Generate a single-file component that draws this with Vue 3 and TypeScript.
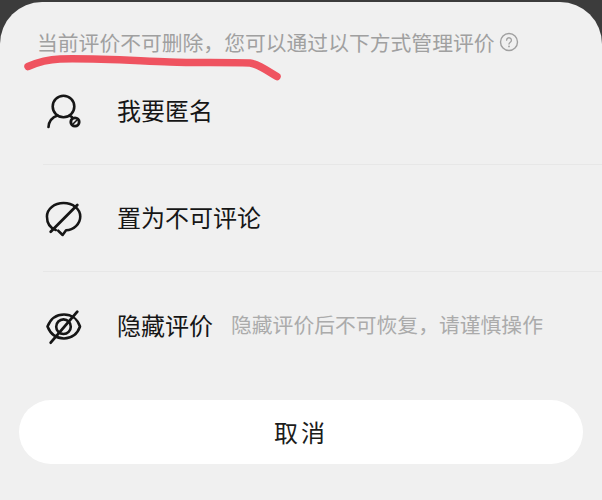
<script setup lang="ts">
interface Row { title: string; note?: string; icon: 'user' | 'chat' | 'eye' }
const rows: Row[] = [
  { title: '我要匿名', icon: 'user' },
  { title: '置为不可评论', icon: 'chat' },
  { title: '隐藏评价', note: '隐藏评价后不可恢复，请谨慎操作', icon: 'eye' },
]
</script>

<template>
  <div class="page">
    <div class="sheet">
      <div class="hint">
        <span>当前评价不可删除，您可以通过以下方式管理评价</span>
        <svg class="help" viewBox="0 0 20 20" width="20" height="20" fill="none">
          <circle cx="10" cy="10" r="8.5" stroke="#a0a0a0" stroke-width="1.4" />
          <path d="M7.6 8.200a2.400 2.400 0 1 1 3.700 2c-.9.6-1.300 1-1.300 1.900" stroke="#a0a0a0" stroke-width="1.300" stroke-linecap="round" />
          <circle cx="10" cy="14.400" r=".9" fill="#a0a0a0" />
        </svg>
      </div>
      <ul class="list">
        <li v-for="row in rows" :key="row.title" class="row">
          <svg class="icon" viewBox="0 0 36 40" width="36" height="40" fill="none" stroke="#161616" stroke-width="2.600" stroke-linecap="round" stroke-linejoin="round">
            <template v-if="row.icon === 'user'">
              <circle cx="18.500" cy="15.500" r="10.800" />
              <path d="M3.500 36c.4-5.500 4-9.800 9-11.500" />
              <path d="M24.500 24.800c1 .4 1.800.8 2.500 1.300" />
              <circle cx="30" cy="31" r="5.600" fill="#161616" stroke="none" />
              <circle cx="30" cy="31" r="2.700" fill="#f0f0f0" stroke="none" />
              <path d="M28 33l4-4" stroke-width="1.600" />
            </template>
            <template v-else-if="row.icon === 'chat'">
              <path d="M11.500 32C6 30 2.500 25 2.500 18.500 2.500 11 10 5 19.500 5s17 6 17 13.500c0 7.500-6.800 13.500-14.500 13.800L18.500 37l-4.500-4.300" transform="translate(-.5 0) scale(.98 1)" />
              <path d="M5.700 33.700L32.300 7" stroke-width="2.800" />
            </template>
            <template v-else>
              <path d="M2.500 20.500C5.500 13 11.500 8.500 19 8.500s13.500 4.500 16 12c-2.500 7.500-8.500 12-16 12s-13.500-4.500-16.500-12z" />
              <circle cx="18.500" cy="20.700" r="7.300" />
              <path d="M5.700 36.700L32.300 5.700" stroke-width="2.800" />
            </template>
          </svg>
          <span class="title">{{ row.title }}</span>
          <span v-if="row.note" class="note">{{ row.note }}</span>
        </li>
      </ul>
      <button class="cancel" type="button">取消</button>
      <svg class="scribble" viewBox="0 0 602 100" width="602" height="100" fill="none">
        <path d="M28 66.500C36 63 46 59.500 60 59C90 58 130 60.500 170 62C195 63 225 62 250 63C258 64 266 70 277 76.500" stroke="#ef5360" stroke-width="7.500" stroke-linecap="round" stroke-linejoin="round" />
      </svg>
    </div>
  </div>
</template>

<style scoped>
.page {
  width: 602px;
  height: 500px;
  background: #3c3c3c;
  padding-top: 2px;
  box-sizing: border-box;
  overflow: hidden;
  font-family: "Noto Sans CJK SC", "Noto Sans", sans-serif;
}
.sheet {
  position: relative;
  height: 498px;
  background: #f0f0f0;
  border-radius: 42px 42px 0 0;
  box-sizing: border-box;
  padding-top: 26px;
}
.hint {
  display: flex;
  align-items: center;
  gap: 4px;
  margin-left: 37px;
  height: 28px;
  font-size: 20.800px;
  color: #a0a0a0;
  white-space: nowrap;
}
.help {
  flex: none;
}
.list {
  list-style: none;
  margin: 2px 0 0 43px;
  padding: 0;
}
.row {
  display: flex;
  align-items: center;
  height: 107px;
  box-sizing: border-box;
  border-bottom: 1px solid #e7e7e7;
  white-space: nowrap;
}
.row:last-child {
  border-bottom: none;
}
.icon {
  flex: none;
  margin-left: 2px;
  overflow: visible;
}
.title {
  margin-left: 36px;
  margin-bottom: 3px;
  font-size: 24px;
  color: #161616;
}
.note {
  margin-left: 18px;
  margin-bottom: 3px;
  font-size: 20.800px;
  color: #ababab;
}
.cancel {
  display: block;
  width: 564px;
  height: 64px;
  margin: 21px 0 0 19px;
  padding: 0 0 2px 0;
  border: none;
  border-radius: 32px;
  background: #ffffff;
  font-family: inherit;
  font-size: 24px;
  color: #1c1c1c;
  letter-spacing: 3px;
}
.scribble {
  position: absolute;
  left: 0;
  top: -2px;
  pointer-events: none;
}
</style>
